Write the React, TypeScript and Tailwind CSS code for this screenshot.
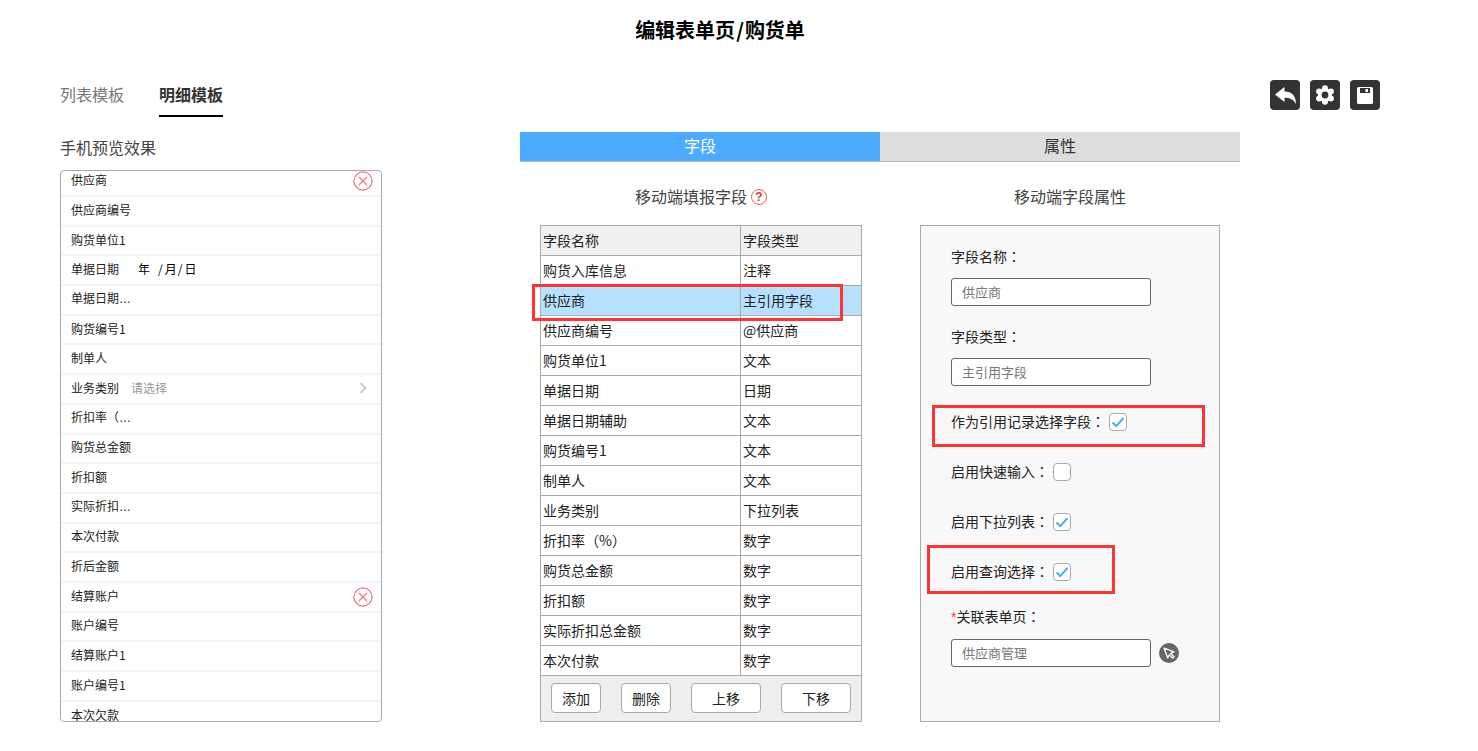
import React from "react";

const phoneRows: { label: string; kind?: "x" | "date" | "select" }[] = [
  { label: "供应商", kind: "x" },
  { label: "供应商编号" },
  { label: "购货单位1" },
  { label: "单据日期", kind: "date" },
  { label: "单据日期…" },
  { label: "购货编号1" },
  { label: "制单人" },
  { label: "业务类别", kind: "select" },
  { label: "折扣率（…" },
  { label: "购货总金额" },
  { label: "折扣额" },
  { label: "实际折扣…" },
  { label: "本次付款" },
  { label: "折后金额" },
  { label: "结算账户", kind: "x" },
  { label: "账户编号" },
  { label: "结算账户1" },
  { label: "账户编号1" },
  { label: "本次欠款" },
];

const tableRows = [
  ["购货入库信息", "注释"],
  ["供应商", "主引用字段"],
  ["供应商编号", "@供应商"],
  ["购货单位1", "文本"],
  ["单据日期", "日期"],
  ["单据日期辅助", "文本"],
  ["购货编号1", "文本"],
  ["制单人", "文本"],
  ["业务类别", "下拉列表"],
  ["折扣率（%）", "数字"],
  ["购货总金额", "数字"],
  ["折扣额", "数字"],
  ["实际折扣总金额", "数字"],
  ["本次付款", "数字"],
];

function T({ s }: { s: string }) {
  const parts = s.split(/([：（）…])/).filter(Boolean);
  return (
    <>
      {parts.map((p, i) =>
        p === "…" ? (
          <span key={i} className="font-['Liberation_Sans',sans-serif]">{p}</span>
        ) : p === "：" ? (
          <span key={i} className="font-['Noto_Sans_CJK_TC',sans-serif]">{p}</span>
        ) : /[（）]/.test(p) ? (
          <span key={i} className="font-['Noto_Sans_CJK_KR',sans-serif]">{p}</span>
        ) : (
          <React.Fragment key={i}>{p}</React.Fragment>
        )
      )}
    </>
  );
}

function XCircle() {
  return (
    <svg width="20" height="20" viewBox="0 0 20 20" fill="none" stroke="#f7707f" className="shrink-0">
      <circle cx="10" cy="10" r="9.1" strokeWidth="1.2" />
      <path d="M6 6l8 8M14 6l-8 8" strokeWidth="1.1" />
    </svg>
  );
}

function Check({ on }: { on: boolean }) {
  return (
    <span className="ml-[4px] flex h-[18px] w-[18px] items-center justify-center rounded-[4px] border border-[#aaaaaa] bg-white">
      {on && (
        <svg width="14" height="12" viewBox="0 0 14 12" fill="none" stroke="#4dabff" strokeWidth="2">
          <path d="M1.5 6.5l3.8 3.6L12.5 2" />
        </svg>
      )}
    </span>
  );
}

function CheckRow({ label, on, className }: { label: string; on: boolean; className: string }) {
  return (
    <div className={`flex h-[20px] items-center text-[14px] leading-[20px] text-[#222222] ${className}`}>
      <span className="mb-[2px]"><T s={label} /></span>
      <Check on={on} />
    </div>
  );
}

function Field({ value }: { value: string }) {
  return (
    <div className="flex h-[28px] w-[200px] items-center rounded-[3px] border border-[#666666] bg-white pl-[10px] text-[13px] leading-[18px] text-[#777777]">
      {value}
    </div>
  );
}

function Btn({ label, w }: { label: string; w: string }) {
  return (
    <div className={`flex h-[30px] items-center justify-center rounded-[4px] border border-[#aaaaaa] bg-white text-[14px] leading-[20px] text-[#222222] ${w}`}>
      {label}
    </div>
  );
}

function IconBox({ children }: { children: React.ReactNode }) {
  return <div className="flex h-[30px] w-[30px] items-center justify-center rounded-[4px] bg-[#333333]">{children}</div>;
}

export default function App() {
  return (
    <div className="relative h-[751px] w-[1478px] overflow-hidden bg-white font-['Noto_Sans_CJK_SC','Liberation_Sans',sans-serif] text-[#222222]">
      <div className="flex h-[60px] w-[1440px] items-center justify-center text-[20px] leading-[28px] font-bold text-black">
        编辑表单页<span className="mx-[1px]">/</span>购货单
      </div>

      <div className="flex h-[57px] items-start justify-between pr-[98px] pl-[60px]">
        <div className="flex gap-[35px] pt-[24px] text-[16px] leading-[20px]">
          <div className="text-[#777777]">列表模板</div>
          <div className="border-b-2 border-black pb-[11px] font-bold text-[#333333]">明细模板</div>
        </div>
        <div className="flex gap-[10px] pt-[20px]">
          <IconBox>
            <svg width="21" height="17" viewBox="0 0 21 17" fill="#ffffff">
              <path d="M0 7.5L9.5 0v4.5c7 0 11.5 4 11.5 12.5-2.5-4.5-6-6.2-11.5-6.2V15z" />
            </svg>
          </IconBox>
          <IconBox>
            <svg width="20" height="20" viewBox="0 0 20 20">
              <g fill="#ffffff">
                <circle cx="10" cy="10" r="7" />
                <circle cx="10" cy="3.2" r="3" />
                <circle cx="10" cy="16.8" r="3" />
                <circle cx="4.1" cy="6.6" r="3" />
                <circle cx="15.9" cy="6.6" r="3" />
                <circle cx="4.1" cy="13.4" r="3" />
                <circle cx="15.9" cy="13.4" r="3" />
              </g>
              <circle cx="10" cy="10" r="3.4" fill="#333333" />
            </svg>
          </IconBox>
          <IconBox>
            <svg width="16" height="17" viewBox="0 0 16 17">
              <rect width="16" height="17" rx="1.5" fill="#ffffff" />
              <rect x="3" y="1" width="10" height="5" fill="#333333" />
              <rect x="8.5" y="2" width="2.5" height="3" fill="#ffffff" />
            </svg>
          </IconBox>
        </div>
      </div>

      <div className="flex pt-[15px] pl-[60px]">
        <div className="w-[322px]">
          <div className="mt-[6px] mb-[12px] h-[20px] text-[16px] leading-[18px] text-[#444444]">手机预览效果</div>
          <div className="h-[552px] overflow-hidden rounded-[4px] border border-[#aaaaaa]">
            <div className="mt-[-3.7px]">
              {phoneRows.map((r, i) => (
                <div
                  key={i}
                  className="flex h-[29.7px] items-center border-b-2 border-[#f5f5f5] pr-[8px] pl-[10px] text-[12px] leading-[16px] text-[#222222]"
                >
                  <span className="mb-[2px] w-[60px] whitespace-nowrap"><T s={r.label} /></span>
                  {r.kind === "date" && (
                    <span className="mb-[2px] ml-[7px] flex text-[12px] whitespace-pre text-black">
                      <span className="mr-[8px]">年</span>
                      <span className="mr-[2px]">/</span>
                      <span className="mr-[1px]">月</span>
                      <span className="mr-[2px]">/</span>
                      <span>日</span>
                    </span>
                  )}
                  {r.kind === "select" && <span className="mb-[2px] text-[#999999]">请选择</span>}
                  <span className="flex-1" />
                  {r.kind === "x" && <XCircle />}
                  {r.kind === "select" && (
                    <svg width="20" height="14" viewBox="0 0 20 14" fill="none" stroke="#cccccc" strokeWidth="2" className="mb-[2px]">
                      <path d="M7.5 2l5 5-5 5" />
                    </svg>
                  )}
                </div>
              ))}
            </div>
          </div>
        </div>

        <div className="ml-[138px] w-[720px]">
          <div className="flex h-[30px] border-b border-[#bbbbbb] text-[16px] leading-[20px]">
            <div className="flex w-[360px] items-center justify-center bg-[#4dabff] pb-[4px] text-white">字段</div>
            <div className="flex w-[360px] items-center justify-center bg-[#dddddd] pb-[4px] text-[#333333]">属性</div>
          </div>

          <div className="flex px-[20px]">
            <div className="w-[322px]">
              <div className="flex h-[63px] items-center justify-center gap-[4px] pt-[4px] text-[16px] leading-[20px] text-[#444444]">
                <span>移动端填报字段</span>
                <span className="mt-[2px] flex h-[16px] w-[16px] items-center justify-center rounded-full border-[1.2px] border-[#f0604f] font-['Liberation_Sans',sans-serif] text-[12px] leading-[14px] font-bold text-[#e8301f]">
                  ?
                </span>
              </div>
              <div className="flex h-[497px] w-[322px] flex-col overflow-hidden border border-[#aaaaaa] text-[14px] leading-[20px] text-[#222222]">
                <div className="flex h-[30px] shrink-0 border-b border-[#aaaaaa] bg-[#f0f0f0]">
                  <div className="flex w-[200px] items-center border-r border-[#aaaaaa] pb-[2px] pl-[2px]">字段名称</div>
                  <div className="flex flex-1 items-center pb-[2px] pl-[2px]">字段类型</div>
                </div>
                {tableRows.map(([a, b], i) => (
                  <div key={i} className={`flex h-[30px] shrink-0 border-b border-[#aaaaaa] ${i === 1 ? "bg-[#b5e1ff]" : ""}`}>
                    <div className="flex w-[200px] items-center border-r border-[#aaaaaa] pb-[2px] pl-[2px]">
                      <span className="whitespace-pre"><T s={a} /></span>
                    </div>
                    <div className="flex flex-1 items-center pb-[2px] pl-[2px]">{b}</div>
                  </div>
                ))}
                <div className="flex flex-1 items-center bg-[#eeeeee] pb-[1px] pl-[10px]">
                  <Btn label="添加" w="w-[50px]" />
                  <div className="w-[20px]" />
                  <Btn label="删除" w="w-[50px]" />
                  <div className="w-[20px]" />
                  <Btn label="上移" w="w-[70px]" />
                  <div className="w-[20px]" />
                  <Btn label="下移" w="w-[70px]" />
                </div>
              </div>
            </div>

            <div className="ml-[58px] w-[300px]">
              <div className="flex h-[63px] items-center justify-center pt-[4px] text-[16px] leading-[20px] text-[#444444]">
                移动端字段属性
              </div>
              <div className="h-[497px] border border-[#aaaaaa] bg-[#f8f8f8] pt-[21px] pl-[30px]">
                <div className="mb-[11px] h-[20px] text-[14px] leading-[18px]"><T s="字段名称：" /></div>
                <Field value="供应商" />
                <div className="mt-[21px] mb-[11px] h-[20px] text-[14px] leading-[18px]"><T s="字段类型：" /></div>
                <Field value="主引用字段" />
                <CheckRow label="作为引用记录选择字段：" on className="mt-[26px]" />
                <CheckRow label="启用快速输入：" on={false} className="mt-[30px]" />
                <CheckRow label="启用下拉列表：" on className="mt-[30px]" />
                <CheckRow label="启用查询选择：" on className="mt-[30px]" />
                <div className="mt-[25px] mb-[12px] h-[20px] text-[14px] leading-[18px]">
                  <span className="font-['Liberation_Sans',sans-serif] text-[#ff3333]">*</span><T s="关联表单页：" />
                </div>
                <div className="flex items-center gap-[8px]">
                  <Field value="供应商管理" />
                  <svg width="20" height="20" viewBox="0 0 20 20">
                    <circle cx="10" cy="10" r="10" fill="#666666" />
                    <path d="M5 5l10 3.8-3.4 1.6 3.4 3.4-1.3 1.3-3.4-3.4-1.5 3.3z" fill="#666666" stroke="#ffffff" strokeWidth="1.3" strokeLinejoin="round" />
                  </svg>
                </div>
              </div>
            </div>
          </div>
        </div>
      </div>

      <div className="absolute top-[284px] left-[532px] h-[37px] w-[311px] border-3 border-[#ff3333]" />
      <div className="absolute top-[405px] left-[932px] h-[42px] w-[273px] border-3 border-[#ff3333]" />
      <div className="absolute top-[545px] left-[927px] h-[49px] w-[188px] border-3 border-[#ff3333]" />
    </div>
  );
}
